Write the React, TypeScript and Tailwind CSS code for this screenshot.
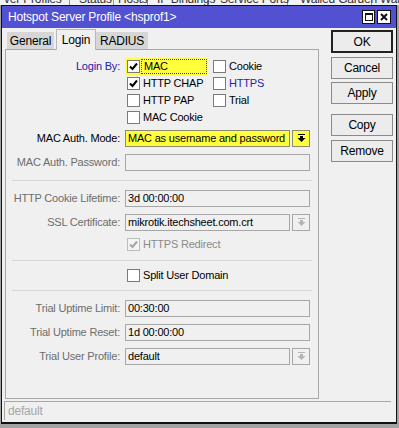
import React from 'react'

function Check({ color = '#000' }: { color?: string }) {
  return (
    <svg width="9" height="9" viewBox="0 0 9 9">
      <polyline points="1,4.5 3.5,7 8,1.5" fill="none" stroke={color} strokeWidth="2" />
    </svg>
  )
}

function Checkbox({ checked = false, disabled = false }: { checked?: boolean; disabled?: boolean }) {
  return (
    <span
      className={`w-[13px] h-[13px] shrink-0 flex items-center justify-center border ${
        disabled ? 'border-[#bcbcbc] bg-[#f4f4f4]' : 'border-[#7a7a7a] bg-white'
      }`}
    >
      {checked && <Check color={disabled ? '#a6a6a6' : '#000'} />}
    </span>
  )
}

function DropIcon({ color = '#000' }: { color?: string }) {
  return (
    <svg width="9" height="9" viewBox="0 0 9 9">
      <rect x="1" y="0" width="7" height="1" fill={color} />
      <rect x="3" y="2" width="3" height="2" fill={color} />
      <polygon points="0.5,4 8.5,4 4.5,8" fill={color} />
    </svg>
  )
}

function Field({
  value = '',
  dropdown = false,
  yellow = false,
}: {
  value?: string
  dropdown?: boolean
  yellow?: boolean
}) {
  const box = yellow ? 'bg-[#ffff3c] border-[#8c8c6c]' : 'bg-[#f0f0f0] border-[#a7a7a7]'
  return (
    <div className="w-[185px] h-[17px] flex">
      <div className={`flex-1 h-full border ${box} pl-[2px] flex items-center text-black leading-none overflow-hidden whitespace-nowrap`}>
        {value}
      </div>
      {dropdown && (
        <div className={`w-[18px] h-full ml-[2px] border ${box} flex items-center justify-center`}>
          <DropIcon color={yellow ? '#000' : '#b4b4b4'} />
        </div>
      )}
    </div>
  )
}

function Row({
  label,
  muted = false,
  children,
  h = 'h-[24px]',
}: {
  label?: string
  muted?: boolean
  children: React.ReactNode
  h?: string
}) {
  return (
    <div className={`flex items-center ${h}`}>
      <div className={`w-[114px] text-right whitespace-nowrap ${muted ? 'text-[#6d6d6d]' : 'text-black'}`}>{label}</div>
      <div className="ml-[5px]">{children}</div>
    </div>
  )
}

function Sep() {
  return (
    <div className="h-[12px] flex items-center px-[6px]">
      <div className="h-px w-full bg-[#d6d6d6]" />
    </div>
  )
}

function CheckItem({
  label,
  checked = false,
  disabled = false,
  blue = false,
}: {
  label: string
  checked?: boolean
  disabled?: boolean
  blue?: boolean
}) {
  return (
    <div className="flex items-center h-[17px] pl-[2px] gap-[3px]">
      <Checkbox checked={checked} disabled={disabled} />
      <span className={disabled ? 'text-[#8a8a8a]' : blue ? 'text-[#2424b4]' : 'text-black'}>{label}</span>
    </div>
  )
}

function Btn({ children, primary = false, h = 'h-[22px]' }: { children: React.ReactNode; primary?: boolean; h?: string }) {
  return (
    <div
      className={`w-[62px] ${h} flex items-center justify-center bg-[#ececec] text-[12px] text-black ${
        primary ? 'border-2 border-[#222]' : 'border border-[#8a8a8a]'
      }`}
    >
      {children}
    </div>
  )
}

export default function App() {
  return (
    <div className="w-[399px] h-[428px] bg-[#a3a3a3] overflow-hidden font-['Liberation_Sans',Arial,sans-serif] text-[11px] tracking-[-0.2px]">
      {/* app behind the window, only the bottom of its tab row shows */}
      <div className="h-[5px] bg-[#f2f2f2] overflow-hidden">
        <div className="flex -mt-[7px] text-[12px] leading-[12px] text-[#333] whitespace-nowrap overflow-hidden">
          <span className="pl-[4px] w-[70px] shrink-0 border-r border-[#999]">ver Profiles</span>
          <span className="pl-[9px] w-[44px] shrink-0 border-r border-[#999]">Status</span>
          <span className="pl-[4px] w-[34px] shrink-0 border-r border-[#999]">Hosts</span>
          <span className="pl-[9px] w-[60px] shrink-0 border-r border-[#999]">IP Bindings</span>
          <span className="pl-[12px] w-[80px] shrink-0 border-r border-[#999]">Service Ports</span>
          <span className="pl-[12px] w-[84px] shrink-0 border-r border-[#999]">Walled Garden</span>
          <span className="pl-[8px]">Walled</span>
        </div>
      </div>

      {/* window */}
      <div className="ml-px w-[396px] h-[419px] border border-[#111] border-b-2 bg-[#f0f0f0] flex flex-col">
        {/* title bar */}
        <div className="h-[22px] bg-[#5151d1] flex items-center pl-[6px] pr-[5px]">
          <span className="text-white text-[12px] flex-1">Hotspot Server Profile &lt;hsprof1&gt;</span>
          <div className="w-[13px] h-[14px] bg-white border border-[#111] flex items-center justify-center">
            <div className="w-[8px] h-[8px] border border-[#111] border-t-2" />
          </div>
          <div className="w-[14px] h-[14px] ml-[2px] bg-white border border-[#111] flex items-center justify-center">
            <svg width="8" height="8" viewBox="0 0 8 8">
              <path d="M1 1 L7 7 M7 1 L1 7" stroke="#111" strokeWidth="2" />
            </svg>
          </div>
        </div>

        {/* body */}
        <div className="flex pl-[3px]">
          <div className="w-[314px] flex flex-col">
            {/* tabs */}
            <div className="h-[21px] flex items-end pl-[2px] pt-px">
              <div className="w-[47px] h-[17px] bg-[#d6d6d6] flex items-center justify-center text-[12px]">General</div>
              <div className="relative z-10 -mb-px w-[40px] h-[21px] ml-[2px] bg-[#f0f0f0] border-x border-t border-[#b8b8b8] flex items-center justify-center text-[12px]">
                Login
              </div>
              <div className="w-[52px] h-[17px] bg-[#d6d6d6] flex items-center justify-center text-[12px]">RADIUS</div>
            </div>

            {/* panel */}
            <div className="h-[350px] border border-[#a7a7a7] pt-[8px]">
              <div className="flex">
                <div className="w-[114px] h-[17px] flex items-center justify-end text-[#2121a8]">Login By:</div>
                <div className="ml-[5px] grid grid-cols-[86px_90px]">
                  <div className="flex items-center h-[17px] w-[82px] bg-[#ffff3c] pl-[2px]">
                    <Checkbox checked />
                    <span className="ml-px h-[15px] flex-1 border border-dotted border-[#444] flex items-center pl-[2px]">MAC</span>
                  </div>
                  <CheckItem label="Cookie" />
                  <CheckItem label="HTTP CHAP" checked />
                  <CheckItem label="HTTPS" blue />
                  <CheckItem label="HTTP PAP" />
                  <CheckItem label="Trial" />
                  <CheckItem label="MAC Cookie" />
                </div>
              </div>

              <Row label="MAC Auth. Mode:">
                <Field value="MAC as username and password" dropdown yellow />
              </Row>
              <Row label="MAC Auth. Password:" muted>
                <Field />
              </Row>
              <Sep />
              <Row label="HTTP Cookie Lifetime:" muted>
                <Field value="3d 00:00:00" />
              </Row>
              <Row label="SSL Certificate:" muted>
                <Field value="mikrotik.itechsheet.com.crt" dropdown />
              </Row>
              <Row h="h-[20px]">
                <CheckItem label="HTTPS Redirect" checked disabled />
              </Row>
              <Sep />
              <Row h="h-[18px]">
                <CheckItem label="Split User Domain" />
              </Row>
              <Sep />
              <Row label="Trial Uptime Limit:" muted>
                <Field value="00:30:00" />
              </Row>
              <Row label="Trial Uptime Reset:" muted>
                <Field value="1d 00:00:00" />
              </Row>
              <Row label="Trial User Profile:" muted>
                <Field value="default" dropdown />
              </Row>
            </div>
          </div>

          {/* buttons */}
          <div className="ml-[12px] mt-[2px] flex flex-col">
            <Btn primary h="h-[23px]">OK</Btn>
            <div className="mt-[4px]"><Btn>Cancel</Btn></div>
            <div className="mt-[3px]"><Btn>Apply</Btn></div>
            <div className="mt-[10px]"><Btn>Copy</Btn></div>
            <div className="mt-[4px]"><Btn>Remove</Btn></div>
          </div>
        </div>

        {/* status bar */}
        <div className="mt-[2px] ml-[2px] w-[387px] h-[19px] border-t border-l border-[#a7a7a7] flex items-center pl-[3px] text-[12px] text-[#a6a6a6]">
          default
        </div>
      </div>
    </div>
  )
}
